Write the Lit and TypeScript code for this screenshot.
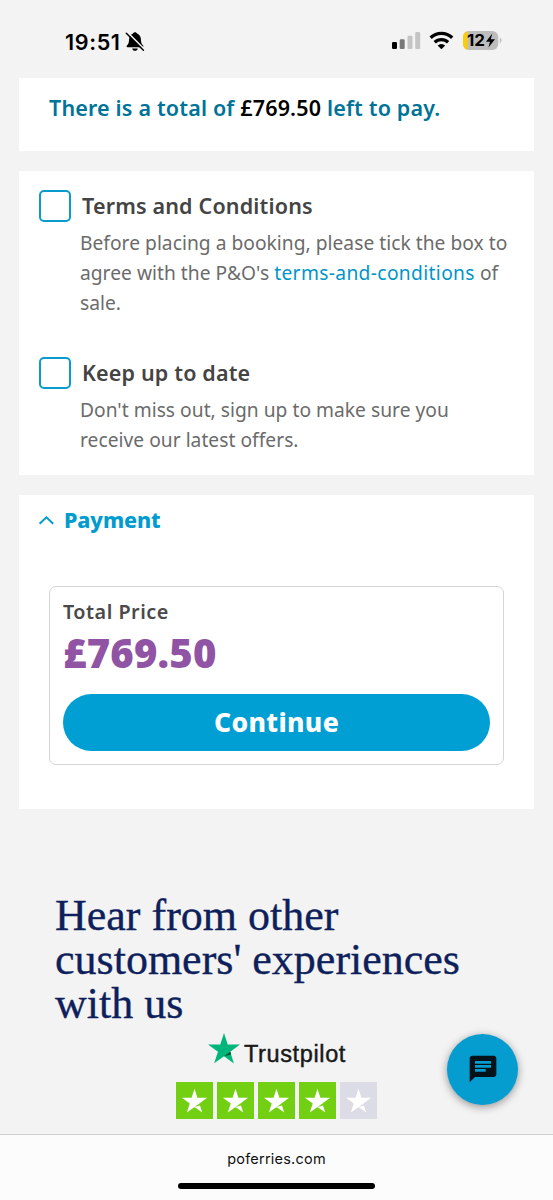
import { LitElement, html, css } from "lit";
import { customElement } from "lit/decorators.js";

@customElement("app-root")
export class AppRoot extends LitElement {
  static styles = css`
    :host { display: flex; flex-direction: column; height: 1200px; width: 553px; overflow: hidden; position: relative;
      background: #f3f3f3; font-family: "Noto Sans", sans-serif; color: #6b6b6b; }
    * { box-sizing: border-box; }
    svg { display: block; flex: none; }
    .status { display: flex; height: 78px; padding: 4px 50px 0 65px; align-items: center; flex: none; }
    .clock { font: 600 21.6px/26px Inter, sans-serif; letter-spacing: .6px; color: #000; padding-top: 1px; width: 60px; }
    .signals { margin-left: auto; }
    .pct { font: 700 16px Inter, sans-serif; }
    .card { background: #fff; margin: 0 19px 20px; flex: none; }
    .due { height: 73px; padding: 15px 30px; font-weight: 600; font-size: 21.5px; line-height: 30px; letter-spacing: .17px; color: #007399; white-space: pre; }
    .due b { color: #000; font-weight: 600; }
    .terms { height: 304px; padding: 19px 20px 0; }
    .option { display: grid; grid-template-columns: 32px 1fr; column-gap: 9px; height: 167px; align-content: start; }
    .box { width: 32px; height: 32px; border: 2px solid #0a9bcd; border-radius: 5px; }
    .opt-title { font-weight: 600; font-size: 21.5px; line-height: 32px; letter-spacing: .17px; color: #444; padding-left: 2px; white-space: nowrap; }
    .copy { grid-column: 2; font-size: 19.2px; line-height: 30px; letter-spacing: .03px; padding-top: 6px; white-space: nowrap; }
    .link { color: #0095c8; letter-spacing: .36px; }
    .pay { height: 314px; padding: 10px 30px 0; margin-bottom: 0; }
    .pay-title { display: flex; align-items: center; gap: 10px; margin-left: -11px; color: #009bcf; font-weight: 800; font-size: 21.5px; line-height: 30px; letter-spacing: -.1px; }
    .total { margin-top: 51px; height: 179px; border: 1.5px solid #d5d5d8; border-radius: 7px; padding: 11px 13px; }
    .label { font-weight: 600; font-size: 19.8px; line-height: 28px; letter-spacing: .5px; color: #4a4a4a; }
    .price { font-weight: 900; font-size: 40px; line-height: 52px; letter-spacing: .2px; color: #9153a3; margin-top: 1px; }
    .button { display: block; width: 100%; height: 57px; margin-top: 15px; border: 0; border-radius: 29px; background: #009fd3; color: #fff; font: 800 26.5px/57px "Noto Sans", sans-serif; letter-spacing: .35px; padding: 0; }
    .hear { margin: 85px 0 0 55px; font: 400 44px/44px "Liberation Serif", serif; color: #0e1f5b; white-space: nowrap; -webkit-text-stroke: .35px; }
    .trust { display: flex; margin: 7px 0 0 208px; height: 33px; }
    .word { font: 400 23.5px/42px "Liberation Sans", sans-serif; letter-spacing: .62px; color: #191919; margin-left: 4px; -webkit-text-stroke: .45px; }
    .stars { display: flex; gap: 4px; margin: 16px 0 0 176px; }
    .tile { width: 37px; height: 37px; background: #73cf11; }
    .tile.off { background: #dcdce6; }
    .chat { position: absolute; left: 447px; top: 1034px; width: 71px; height: 71px; border-radius: 50%; background: #059dcf; box-shadow: 0 2px 8px #0006; display: grid; place-items: center; }
    .chat svg { margin-top: -2px; }
    .bottom { margin-top: auto; height: 66px; flex: none; background: #fcfcfd; border-top: 1px solid #cfcfd1; display: flex; flex-direction: column; align-items: center; }
    .url { font: 400 14.5px/20px Inter, sans-serif; letter-spacing: .22px; color: #111; margin-top: 14px; }
    .home { width: 197px; height: 6px; border-radius: 3px; background: #000; margin-top: 14px; }
  `;

  tile(on: boolean) {
    return html`<div class="tile ${on ? "" : "off"}"><svg width="37" height="37" viewBox="0 0 96 96" fill="#fff"><path d="M48 64.7 62.2 61.1 68.1 79.4ZM80.6 41.1H55.6L48 17.6 40.4 41.1H15.4L35.7 55.6 28 79.1 48.3 64.6 60.8 55.6Z"/></svg></div>`;
  }

  render() {
    return html`
      <div class="status">
        <span class="clock">19:51</span>
        <svg width="20" height="21" viewBox="0 0 20 21">
          <path d="M10 1.2c1 0 1.7.6 2 1.4 2.600 1 3.700 3 3.900 5.600.2 3.600.7 4.800 2.200 6.300.6.7.3 1.700-.7 1.700H2.600c-1 0-1.300-1-.7-1.700C3.400 13 3.900 11.800 4.100 8.200 4.300 5.600 5.400 3.600 8 2.600c.3-.8 1-1.400 2-1.400ZM7.200 17.400h5.600c-.3 1.400-1.400 2.300-2.800 2.300s-2.500-.9-2.800-2.300Z" fill="#000"/>
          <path d="M2.200 1.200 19.600 18.600" stroke="#f3f3f3" stroke-width="1.800"/>
          <path d="M1.300 2.200 18.400 19.300" stroke="#000" stroke-width="1.500" stroke-linecap="round"/>
        </svg>
        <svg class="signals" width="113" height="24" viewBox="390 29 113 24">
          <rect x="392" y="42" width="5" height="7" rx="1.300"/>
          <rect x="399.700" y="39.200" width="5" height="9.800" rx="1.300" fill="#777"/>
          <rect x="407.500" y="35.700" width="5" height="13.300" rx="1.300" fill="#c4c4c4"/>
          <rect x="415.200" y="32" width="5" height="17" rx="1.300" fill="#c4c4c4"/>
          <g fill="none" stroke="#000" stroke-width="3.300"><path d="M430.600 37.800a15.500 15.500 0 0 1 21.600 0"/><path d="M434.700 42.300a9.700 9.700 0 0 1 13.400 0"/></g>
          <path d="M441.400 49.200 437.600 45.400a5.500 5.500 0 0 1 7.600 0Z"/>
          <clipPath id="cell"><rect x="463" y="31" width="35.300" height="19" rx="6"/></clipPath>
          <g clip-path="url(#cell)"><rect x="463" y="31" width="36" height="19" fill="#bdbdbd"/><rect x="463" y="31" width="4.600" height="19" fill="#fccc0a"/></g>
          <path d="M499.800 37.600c2.200.8 2.200 5 0 5.800Z" fill="#bdbdbd"/>
          <text class="pct" x="467" y="46.400" textLength="18" lengthAdjust="spacingAndGlyphs">12</text>
          <path d="M492.300 33.600 486 41.700h4l-1.600 5.800 6.600-8.200h-4.200Z"/>
        </svg>
      </div>
      <div class="card due">There is a total of <b>£769.50</b> left to pay.</div>
      <div class="card terms">
        <div class="option"><div class="box"></div><div class="opt-title">Terms and Conditions</div>
          <div class="copy">Before placing a booking, please tick the box to<br>agree with the P&amp;O's <span class="link">terms-and-conditions</span> of<br>sale.</div></div>
        <div class="option"><div class="box"></div><div class="opt-title">Keep up to date</div>
          <div class="copy">Don't miss out, sign up to make sure you<br>receive our latest offers.</div></div>
      </div>
      <div class="card pay">
        <div class="pay-title"><svg width="16" height="10" viewBox="0 0 16 10"><path d="M1.600 8.800 8.400 2.300 15.200 8.800" fill="none" stroke="#009bcf" stroke-width="2"/></svg>Payment</div>
        <div class="total"><div class="label">Total Price</div><div class="price">£769.50</div><button class="button">Continue</button></div>
      </div>
      <div class="hear">Hear from other<br>customers' experiences<br>with us</div>
      <div class="trust">
        <svg width="32" height="30.500" viewBox="15.400 17.600 65.200 61.800"><path fill="#00b67a" d="M80.600 41.100H55.600L48 17.600 40.400 41.100H15.400L35.700 55.600 28 79.100 48 64.600 68.100 79.400 60.800 55.600Z"/><path fill="#005128" d="M62.500 61.100 60.800 55.600 48 64.600Z"/></svg>
        <span class="word">Trustpilot</span>
      </div>
      <div class="stars">${[1, 1, 1, 1, 0].map((v) => this.tile(!!v))}</div>
      <div class="chat"><svg width="32" height="32" viewBox="0 0 24 24"><path fill="#04121a" d="M20 2H4c-1.100 0-1.990.9-1.990 2L2 22l4-4h14c1.100 0 2-.9 2-2V4c0-1.100-.9-2-2-2zM6 9h12v2H6V9zm8 5H6v-2h8v2zm4-6H6V6h12v2z"/></svg></div>
      <div class="bottom"><div class="url">poferries.com</div><div class="home"></div></div>`;
  }
}
